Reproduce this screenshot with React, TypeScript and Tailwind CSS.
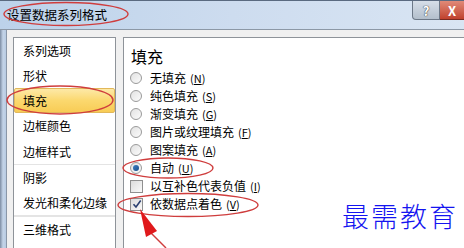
import React from "react";

const font = { fontFamily: '"Noto Sans CJK SC", "Noto Sans", sans-serif' };

function Key({ k }: { k: string }) {
  return (
    <span className="ml-[4px] text-[11px]">
      (<span className="underline">{k}</span>)
    </span>
  );
}

function Radio({ checked }: { checked?: boolean }) {
  return (
    <span className="flex h-[12px] w-[12px] items-center justify-center rounded-full border border-[#9a9a9a] bg-gradient-to-br from-[#e2e2e2] to-[#fbfbfb]">
      {checked && (
        <span className="h-[6px] w-[6px] rounded-full bg-gradient-to-br from-[#3d7fc4] to-[#1c4f8a]" />
      )}
    </span>
  );
}

function Check({ checked }: { checked?: boolean }) {
  return (
    <span className="flex h-[13px] w-[13px] items-center justify-center border border-[#8f8f8f] bg-gradient-to-br from-[#dcdcdc] to-[#fafafa]">
      {checked && (
        <svg width="10" height="10" viewBox="0 0 10 10">
          <path d="M1.5 5.2 L4 8 L8.7 1.5" stroke="#2a3f70" strokeWidth="1.6" fill="none" />
        </svg>
      )}
    </span>
  );
}

export default function App() {
  const leftItems1 = ["系列选项", "形状"];
  return (
    <div className="relative h-[248px] w-[464px] overflow-hidden bg-[#f0f0f0] text-black" style={font}>
      {/* title bar */}
      <div className="flex h-[29px] items-start border-t border-[#5a6a80] bg-gradient-to-r from-[#bcd2ea] via-[#cddcef] to-[#d9e5f3]">
        <div className="pl-[7px] pt-[6px] text-[12.5px] leading-[16px]">设置数据系列格式</div>
        <div className="ml-auto flex">
          <div className="flex h-[19px] w-[28px] items-center justify-center rounded-bl-[4px] border border-t-0 border-[#6c7887] bg-gradient-to-b from-[#d6dee8] to-[#b3bfcc] text-[13px] font-bold leading-none text-white [text-shadow:0_0_1px_#333,0_0_1px_#333]">
            ?
          </div>
          <div className="flex h-[19px] w-[24px] items-center justify-center border-b border-[#7a2a20] bg-gradient-to-b from-[#e08a78] to-[#c0402c] text-[13px] font-bold leading-none text-white">
            X
          </div>
        </div>
      </div>
      <div className="h-[1px] bg-[#8c98a6]" />
      {/* body */}
      <div className="flex h-[218px]">
        <div className="w-[7px] border-r border-[#8a97a8] bg-gradient-to-r from-[#7d8da3] via-[#c4d4e8] to-[#b8cbe2]" />
        <div className="flex flex-1 gap-[7px] pl-[6px] pt-[7px]">
          {/* left panel */}
          <div className="w-[103px] border border-b-0 border-[#8e9399] bg-white pt-[-1px] text-[12px]">
            {leftItems1.map((t) => (
              <div key={t} className="flex h-[25px] items-center pl-[9px]">{t}</div>
            ))}
            <div className="flex h-[25px] items-center rounded-[2px] border border-[#e2b85a] bg-gradient-to-b from-[#fde9a6] via-[#fbd86e] to-[#f8cc55] pl-[8px]">
              填充
            </div>
            <div className="flex h-[26px] items-center pl-[9px]">边框颜色</div>
            <div className="flex h-[25px] items-center pl-[9px]">边框样式</div>
            <div className="h-[1px] bg-[#e4e4e4]" />
            <div className="flex h-[25px] items-center pl-[9px]">阴影</div>
            <div className="flex h-[25px] items-center pl-[9px]">发光和柔化边缘</div>
            <div className="h-[2px] bg-[#e4e4e4]" />
            <div className="flex h-[25px] items-center pl-[9px]">三维格式</div>
          </div>
          {/* right panel */}
          <div className="flex-1 border border-r-0 border-b-0 border-[#8e9399] bg-white pl-[6px] pt-[5px] text-[12px]">
            <div className="flex h-[26px] items-center pl-[1px] text-[16px]">填充</div>
            {[
              ["无填充", "N"],
              ["纯色填充", "S"],
              ["渐变填充", "G"],
              ["图片或纹理填充", "F"],
              ["图案填充", "A"],
            ].map(([t, k]) => (
              <div key={t} className="flex h-[18px] items-center gap-[8px]">
                <Radio />
                <span>
                  {t}
                  <Key k={k} />
                </span>
              </div>
            ))}
            <div className="flex h-[18px] items-center gap-[8px]">
              <Radio checked />
              <span>
                自动
                <Key k="U" />
              </span>
            </div>
            <div className="flex h-[18px] items-center gap-[7px]">
              <Check />
              <span>
                以互补色代表负值
                <Key k="I" />
              </span>
            </div>
            <div className="flex h-[18px] items-center gap-[7px]">
              <Check checked />
              <span>
                依数据点着色
                <Key k="V" />
              </span>
            </div>
          </div>
        </div>
      </div>

      {/* annotations */}
      <svg className="pointer-events-none absolute inset-0" width="464" height="248" viewBox="0 0 464 248">
        <g fill="none" stroke="#cf3d3d" strokeWidth="1.4">
          <ellipse cx="66" cy="14" rx="62" ry="11.5" />
          <ellipse cx="60" cy="100" rx="53" ry="14" />
          <ellipse cx="168" cy="168" rx="45" ry="10" />
          <ellipse cx="188" cy="205" rx="70" ry="11.5" />
          <line x1="151" y1="233" x2="166" y2="248" />
        </g>
        <polygon points="140,209 157,231 146,237" fill="#e0191c" />
      </svg>
      <div className="absolute left-[342px] top-[200px] text-[27px] font-light leading-[32px] tracking-[2px] text-[#1414f0]">
        最需教育
      </div>
    </div>
  );
}
